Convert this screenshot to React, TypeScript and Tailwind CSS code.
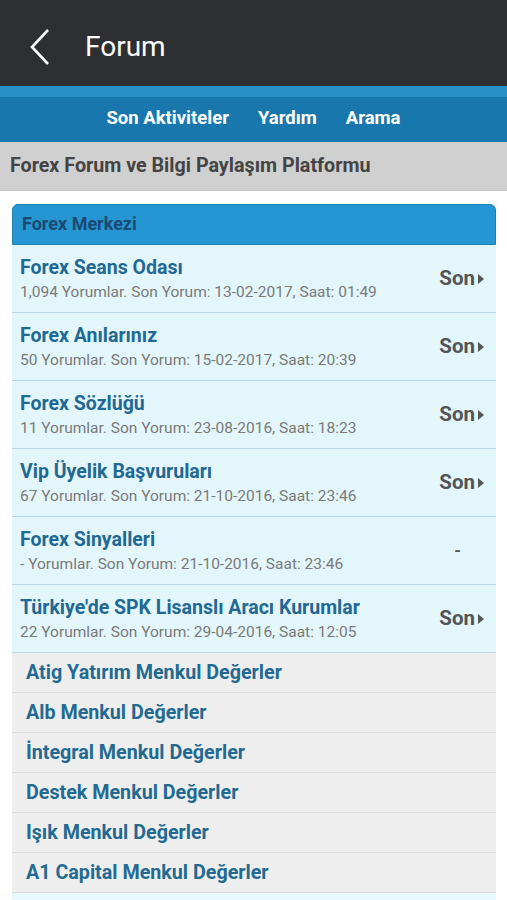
import React from "react";

const topics = [
  { t: "Forex Seans Odası", s: "1,094 Yorumlar. Son Yorum: 13-02-2017, Saat: 01:49", son: true },
  { t: "Forex Anılarınız", s: "50 Yorumlar. Son Yorum: 15-02-2017, Saat: 20:39", son: true },
  { t: "Forex Sözlüğü", s: "11 Yorumlar. Son Yorum: 23-08-2016, Saat: 18:23", son: true },
  { t: "Vip Üyelik Başvuruları", s: "67 Yorumlar. Son Yorum: 21-10-2016, Saat: 23:46", son: true },
  { t: "Forex Sinyalleri", s: "- Yorumlar. Son Yorum: 21-10-2016, Saat: 23:46", son: false },
  { t: "Türkiye'de SPK Lisanslı Aracı Kurumlar", s: "22 Yorumlar. Son Yorum: 29-04-2016, Saat: 12:05", son: true },
];

const subs = [
  "Atig Yatırım Menkul Değerler",
  "Alb Menkul Değerler",
  "İntegral Menkul Değerler",
  "Destek Menkul Değerler",
  "Işık Menkul Değerler",
  "A1 Capital Menkul Değerler",
];

export default function App() {
  return (
    <div className="w-[507px] h-[900px] overflow-hidden bg-white" style={{ fontFamily: "Roboto, 'Noto Sans', sans-serif" }}>
      <div className="h-[86px] bg-[#2e2f33] flex items-center pt-[8px]">
        <svg width="24" height="38" viewBox="0 0 24 38" className="ml-[28px]">
          <path d="M20 2 L4 19 L20 36" fill="none" stroke="#ffffff" strokeWidth="2.6" />
        </svg>
        <span className="ml-[33px] text-white text-[28px] leading-none">Forum</span>
      </div>
      <div className="h-[56px] bg-[#1878ad] flex flex-col">
        <div className="h-[11px] bg-[#2a90c8]" />
        <div className="flex-1 flex items-center justify-center gap-[29px] text-white font-bold text-[18.5px] pb-[2px]">
          <span>Son Aktiviteler</span>
          <span>Yardım</span>
          <span>Arama</span>
        </div>
      </div>
      <div className="h-[49px] bg-[#d0d0d0] flex items-center px-[10px] border-b border-[#c4c4c4]">
        <span className="text-[#444444] font-bold text-[19.7px]">Forex Forum ve Bilgi Paylaşım Platformu</span>
      </div>
      <div className="mx-[12px] mt-[13px] w-[484px]">
        <div className="h-[41px] rounded-t-[6px] bg-[#2596d1] border border-[#1d7fb3] flex items-center px-[9px] pb-[3px]">
          <span className="text-[#1a4a72] font-bold text-[18px]">Forex Merkezi</span>
        </div>
        {topics.map((r, i) => (
          <div key={i} className="h-[68px] bg-[#e3f6fb] border-b border-[#b6d6e2] flex items-center pl-[8px] pr-[12px]">
            <div className="flex-1 flex flex-col">
              <span className="text-[#1f6994] font-bold text-[19.5px] leading-[24px]">{r.t}</span>
              <span className="text-[#7a7a7a] text-[15.5px] leading-[19px] mt-[3px]">{r.s}</span>
            </div>
            {r.son ? (
              <div className="flex items-center gap-[3px] text-[#555555] font-bold text-[20.5px]">
                <span>Son</span>
                <svg width="6" height="10" viewBox="0 0 6 10">
                  <path d="M0 0 L6 5 L0 10 Z" fill="#555555" />
                </svg>
              </div>
            ) : (
              <span className="text-[#555555] font-bold text-[17px] mr-[23px]">-</span>
            )}
          </div>
        ))}
        {subs.map((s, i) => (
          <div key={i} className="h-[40px] bg-[#eeeeee] border-b border-[#dcdcdc] flex items-center pl-[14px]">
            <span className="text-[#226a92] font-bold text-[19.7px]">{s}</span>
          </div>
        ))}
        <div className="h-[20px] bg-[#e8fafd]" />
      </div>
    </div>
  );
}
